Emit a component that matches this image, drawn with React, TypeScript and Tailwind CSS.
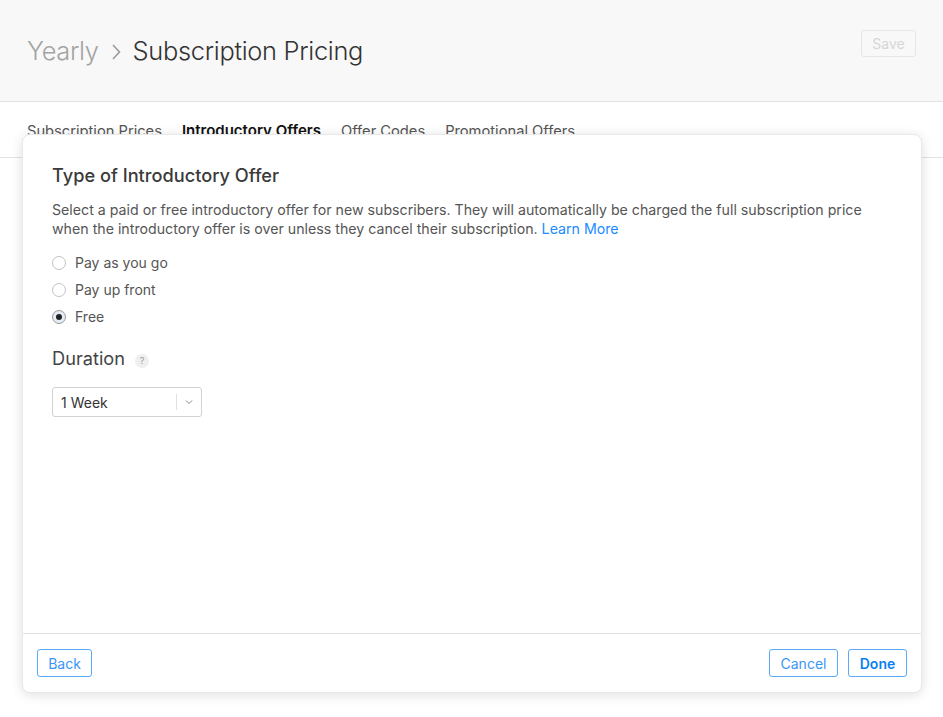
import React from "react";

function Radio({ checked, label }: { checked?: boolean; label: string }) {
  return (
    <div className="flex items-center h-[27px]">
      <span
        className={
          checked
            ? "w-[14px] h-[14px] rounded-full border border-[#9a9a9a] bg-[#e4ecf7] flex items-center justify-center"
            : "w-[14px] h-[14px] rounded-full border border-[#c2c2c2] bg-white"
        }
      >
        {checked ? <span className="w-[6px] h-[6px] rounded-full bg-[#222]" /> : null}
      </span>
      <span className="ml-[9px] text-[14px] text-[#555]">{label}</span>
    </div>
  );
}

export default function App() {
  return (
    <div
      className="relative w-[943px] h-[717px] overflow-hidden bg-white"
      style={{ fontFamily: "Inter, 'Noto Sans', sans-serif" }}
    >
      <div className="h-[102px] bg-[#f8f8f8] border-b border-[#e3e3e3] flex justify-between pl-[27px] pr-[27px]">
        <div className="flex items-center h-[101px] pt-[2px] text-[25.4px] font-light tracking-[-0.3px]">
          <span className="text-[#a3a3a3]">Yearly</span>
          <svg className="ml-[11px] mr-[11px]" width="12" height="20" viewBox="0 0 12 20">
            <path d="M3 3 L9.5 10 L3 17" fill="none" stroke="#9a9a9a" strokeWidth="1.6" />
          </svg>
          <span className="text-[#333]">Subscription Pricing</span>
        </div>
        <div className="pt-[30px]">
          <div className="w-[55px] h-[27px] rounded-[3px] border border-[#e6e6e6] flex items-center justify-center text-[14px] text-[#d6d6d6]">
            Save
          </div>
        </div>
      </div>
      <div className="h-[56px] border-b border-[#e3e3e3] flex items-center pt-[3px] pl-[27px] gap-[20px] text-[14.7px] text-[#555]">
        <span>Subscription Prices</span>
        <span className="font-semibold text-[#111] text-[15px]">Introductory Offers</span>
        <span>Offer Codes</span>
        <span>Promotional Offers</span>
      </div>

      <div className="absolute left-[22px] top-[134px] w-[900px] h-[559px] bg-white rounded-[8px] shadow-[0_2px_12px_rgba(0,0,0,0.13)] border border-[#e9e9e9] flex flex-col">
        <div className="flex-1 px-[29px] pt-[28px]">
          <div className="text-[18.2px] leading-[24px] font-medium text-[#3a3a3a]">Type of Introductory Offer</div>
          <div className="mt-[13px] text-[14.2px] leading-[19px] text-[#555]">
            Select a paid or free introductory offer for new subscribers. They will automatically be charged the full subscription price
            <br />
            when the introductory offer is over unless they cancel their subscription.{" "}
            <span className="text-[#1a8cff]">Learn More</span>
          </div>
          <div className="mt-[11px] flex flex-col">
            <Radio label="Pay as you go" />
            <Radio label="Pay up front" />
            <Radio checked label="Free" />
          </div>
          <div className="mt-[17px] flex items-center h-[24px]">
            <span className="text-[18.2px] text-[#444]">Duration</span>
            <span className="ml-[10px] w-[14px] h-[14px] rounded-full bg-[#efefef] text-[#999] text-[9px] flex items-center justify-center mt-[3px]">
              ?
            </span>
          </div>
          <div className="mt-[16px] w-[150px] h-[30px] rounded-[3px] border border-[#d2d2d2] flex items-center">
            <span className="flex-1 pl-[8px] text-[14px] text-[#333]">1 Week</span>
            <span className="w-px h-[16px] bg-[#e0e0e0]" />
            <span className="w-[24px] flex items-center justify-center">
              <svg width="8" height="6" viewBox="0 0 8 6">
                <path d="M1 1.5 L4 4.5 L7 1.5" fill="none" stroke="#888" strokeWidth="1" />
              </svg>
            </span>
          </div>
        </div>
        <div className="h-[59px] border-t border-[#e3e3e3] flex items-center justify-between px-[14px]">
          <div className="w-[55px] h-[28px] rounded-[3px] border border-[#5aaaf7] flex items-center justify-center text-[14px] text-[#3a96f5]">
            Back
          </div>
          <div className="flex gap-[10px]">
            <div className="w-[69px] h-[28px] rounded-[3px] border border-[#5aaaf7] flex items-center justify-center text-[14px] text-[#3a96f5]">
              Cancel
            </div>
            <div className="w-[59px] h-[28px] rounded-[3px] border border-[#5aaaf7] flex items-center justify-center text-[14px] font-semibold text-[#0a7ff0]">
              Done
            </div>
          </div>
        </div>
      </div>
    </div>
  );
}
